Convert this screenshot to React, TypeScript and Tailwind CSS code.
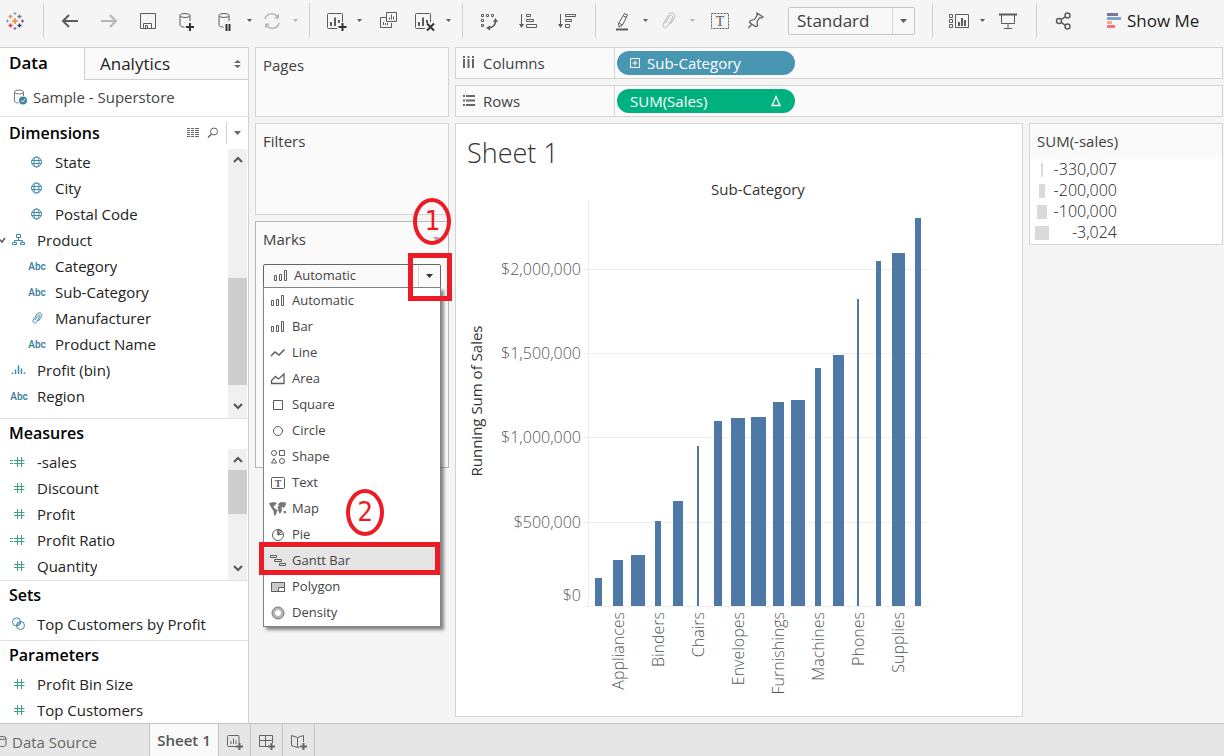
import React from 'react';
import clsx from 'clsx';

type IconProps = { children: React.ReactNode; size?: 16 | 24; className?: string };

const Icon: React.FC<IconProps> = ({ children, size = 16, className }) => (
  <svg
    width={size}
    height={size}
    viewBox={`0 0 ${size} ${size}`}
    fill="none"
    stroke="currentColor"
    strokeWidth="1"
    aria-hidden="true"
    className={clsx('shrink-0 overflow-visible', className)}
  >
    {children}
  </svg>
);

/* ---------- toolbar pieces ---------- */

interface ToolProps {
  label: string;
  disabled?: boolean;
  children: React.ReactNode;
}

const Tool: React.FC<ToolProps> = ({ label, disabled, children }) => (
  <button
    type="button"
    aria-label={label}
    disabled={disabled}
    className="size-6 shrink-0 text-[#5c5c5c] disabled:text-[#b5b5b5]"
  >
    <Icon size={24}>{children}</Icon>
  </button>
);

const Triangle: React.FC<{ className?: string }> = ({ className }) => (
  <svg width="7" height="4" viewBox="0 0 7 4" aria-hidden="true" className={clsx('shrink-0', className)}>
    <path d="M0 0h7L3.5 4z" fill="currentColor" />
  </svg>
);

const Split: React.FC<ToolProps> = ({ label, disabled, children }) => (
  <div className="flex items-center gap-[5px]">
    <Tool label={label} disabled={disabled}>{children}</Tool>
    <button
      type="button"
      aria-label={`${label} options`}
      disabled={disabled}
      className="flex h-6 w-3 items-center justify-center text-[#5c5c5c] disabled:text-[#b5b5b5]"
    >
      <svg width="5" height="3" viewBox="0 0 5 3" aria-hidden="true">
        <path d="M0 0h5L2.5 3z" fill="currentColor" />
      </svg>
    </button>
  </div>
);

const Divider = () => <div className="h-[35px] w-px shrink-0 bg-[#cfcfcf]" />;

const Cylinder = () => (
  <>
    <ellipse cx="10" cy="6.5" rx="5" ry="2" />
    <path d="M5 6.5v9.500c0 1.200 1.800 2 4.500 2.200M15 6.500v5.500" />
  </>
);

const SheetFrame = ({ x = 3 }: { x?: number }) => (
  <>
    <path d={`M${x + 10} 19.500H${x + 1.5}a1 1 0 0 1-1-1V5.500a1 1 0 0 1 1-1h13a1 1 0 0 1 1 1V13`} />
    <path d={`M${x + 4} 17v-4M${x + 8} 17V8.500M${x + 12} 14v-3`} strokeWidth="2" />
  </>
);

const Logo = () => (
  <svg width="18" height="18" viewBox="0 0 18 18" aria-hidden="true" className="shrink-0">
    <path d="M9 6v6M6 9h6" stroke="#eb8a3c" strokeWidth="1.500" />
    <path d="M4.500 2.500v4M2.500 4.500h4" stroke="#e0974a" strokeWidth="1.300" />
    <path d="M13.500 2.500v4M11.500 4.500h4" stroke="#5c7f9c" strokeWidth="1.300" />
    <path d="M4.500 11.500v4M2.500 13.500h4" stroke="#e3312c" strokeWidth="1.300" />
    <path d="M13.500 11.500v4M11.500 13.500h4" stroke="#2b3180" strokeWidth="1.300" />
    <path d="M9 0v3M7.500 1.500h3" stroke="#7b9cb8" />
    <path d="M9 15v3M7.500 16.500h3" stroke="#6f6ba4" />
    <path d="M1.500 7.500v3M0 9h3" stroke="#7b9cb8" />
    <path d="M16.500 7.500v3M15 9h3" stroke="#4d5191" />
  </svg>
);

const Toolbar = () => (
  <header className="flex h-[47px] shrink-0 items-center overflow-hidden pb-[6px] pl-[6px]">
    <Logo />
    <div className="ml-[19px]"><Divider /></div>

    <div className="mr-2 ml-[14px] flex items-center gap-[15px]">
      <Tool label="Back">
        <path d="M5 12h15M11 6l-6 6 6 6" strokeWidth="2" />
      </Tool>
      <Tool label="Forward" disabled>
        <path d="M4 12h15M13 6l6 6-6 6" strokeWidth="2" />
      </Tool>
      <Tool label="Save">
        <path d="M4.500 4.500h15v15h-15zM7.500 19.500v-5h8v5M9.500 19.500v-3h2v3" />
      </Tool>
      <Tool label="New data source">
        <Cylinder />
        <path d="M15 14v8M11 18h8" stroke="#333" strokeWidth="2" />
      </Tool>
      <div className="flex items-center gap-[5px]">
        <Split label="Pause auto updates">
          <Cylinder />
          <path d="M12.500 15v7M15.500 15v7" stroke="#333" strokeWidth="2" />
        </Split>
        <Split label="Refresh" disabled>
          <path d="M5 10a7 7 0 0 1 12-3M19 14a7 7 0 0 1-12 3" strokeWidth="1.500" />
          <path d="M19 4.500v5h-5zM5 19.500v-5h5z" fill="currentColor" stroke="none" />
        </Split>
      </div>
    </div>
    <Divider />

    <div className="mr-2 ml-[14px] flex items-center gap-3">
      <Split label="New worksheet">
        <SheetFrame />
        <path d="M18.500 14v8M14.500 18h8" stroke="#333" strokeWidth="2" />
      </Split>
      <Tool label="Duplicate sheet">
        <path d="M9.500 3.500h10v9h-10zM9 8.500H3.500v10h11V14" />
        <path d="M12.500 10.500v-2M14.500 10.500v-5M16.500 10.500v-3M6.500 16v-3M8.500 16v-2M10.500 16v-2" />
      </Tool>
      <Split label="Clear sheet">
        <SheetFrame x={2} />
        <path d="M14 14.500l7 7M21 14.500l-7 7" stroke="#333" strokeWidth="2" />
      </Split>
    </div>
    <Divider />

    <div className="mr-4 ml-[14px] flex items-center gap-[15px]">
      <Tool label="Swap rows and columns">
        <path d="M4.500 5.500h2v2h-2zM9.500 5.500h2v2h-2zM14.500 5.500h2v2h-2zM4.500 10.500h2v2h-2zM4.500 15.500h2v2h-2z" />
        <path d="M18.500 12c0 4-3 6.500-7 7" strokeWidth="1.500" />
        <path d="M18.500 9l2.500 4h-5zM9 19l4-2.500v5z" fill="currentColor" stroke="none" />
      </Tool>
      <Tool label="Sort ascending">
        <path d="M5.500 5v11" />
        <path d="M5.500 19L3 15h5z" fill="currentColor" stroke="none" />
        <path d="M10.500 5.500h4v2h-4zM10.500 10.500h7v2h-7zM10.500 15.500h10v3h-10z" />
      </Tool>
      <Tool label="Sort descending">
        <path d="M5.500 5v11" />
        <path d="M5.500 19L3 15h5z" fill="currentColor" stroke="none" />
        <path d="M10.500 5.500h10v2h-10zM10.500 10.500h6v2h-6zM10.500 15.500h4v3h-4z" />
      </Tool>
    </div>
    <Divider />

    <div className="mr-4 ml-[14px] flex items-center gap-[6px]">
      <Split label="Highlight">
        <path d="M14.500 4.500l3 1.500-5 10-3.500 2-.5-3.500zM9 14l3 2M13.500 7l3 1.500" />
        <path d="M6 20.500h12" strokeWidth="2" />
      </Split>
      <Split label="Group members" disabled>
        <path d="M8 14.500l4.500-7c1.500-2 4-.5 3 1.500l-5 8c-2 3-6 1-4-2.500l5.500-9c2.500-3.500 7.500-.5 5.500 3l-4 6.500" />
      </Split>
      <div className="ml-1 flex items-center gap-3">
        <Tool label="Show mark labels">
          <path d="M3.500 4.500h17v15h-17z" strokeDasharray="2 1" />
          <text x="12" y="17" textAnchor="middle" fontSize="14" fill="currentColor" stroke="none" className="font-['Liberation_Serif']">T</text>
        </Tool>
        <Tool label="Fix axes">
          <path d="M13 4l6 4-1.500 1-1.500-.5-3 4 .5 4.500-2 .5-6-4 1-2 4-1 2.500-4zM8 15l-3.500 4" strokeWidth="1.200" />
        </Tool>
      </div>
    </div>

    <div className="relative ml-1 h-7 w-[127px] shrink-0">
      <select
        aria-label="Fit"
        className="size-full appearance-none rounded-xs border border-[#c6c6c6] bg-[#f8f8f8] pl-2 text-[17px] text-[#404040]"
      >
        <option>Standard</option>
      </select>
      <span className="pointer-events-none absolute inset-y-px right-px flex w-[22px] items-center justify-center border-l border-[#d4d4d4] text-[#5c5c5c]">
        <Triangle />
      </span>
    </div>
    <div className="ml-[17px]"><Divider /></div>

    <div className="mr-4 ml-[14px] flex items-center gap-2">
      <Split label="Show cards">
        <path d="M2.500 5.500h3v3h-3zM2.500 10.500h3v3h-3zM2.500 15.500h3v3h-3zM8.500 5.500h13v13h-13z" />
        <path d="M12 17v-4M15 17V9M18 17v-6" strokeWidth="2" />
      </Split>
      <Tool label="Presentation mode">
        <path d="M3 5.500h18" strokeWidth="2" />
        <path d="M5.500 6v8.500h13V6M12 14.500v5M8 19.500h8" />
      </Tool>
    </div>
    <Divider />

    <div className="mx-[14px] flex items-center">
      <Tool label="Share">
        <g strokeWidth="1.500">
          <circle cx="8" cy="12" r="2.500" />
          <circle cx="16.500" cy="6.500" r="2.500" />
          <circle cx="16.500" cy="17.500" r="2.500" />
          <path d="M10 10.700l4.500-3M10 13.300l4.500 3" />
        </g>
      </Tool>
    </div>
    <button type="button" className="ml-[18px] flex shrink-0 items-center gap-[6px] text-[17px] text-[#1c1c1c]">
      <svg width="14" height="15" viewBox="0 0 14 15" aria-hidden="true">
        <path d="M0 0h11v3H0z" fill="#7b7599" />
        <path d="M0 4h14v3H0z" fill="#7da3d2" />
        <path d="M0 8h5v3H0z" fill="#ecb27c" />
        <path d="M0 12h8v3H0z" fill="#fd6f7a" />
      </svg>
      Show Me
    </button>
  </header>
);

/* ---------- data pane ---------- */

type FieldKind = 'geo' | 'hierarchy' | 'abc' | 'group' | 'bin' | 'number' | 'calc' | 'set';

interface Field {
  name: string;
  kind: FieldKind;
  nested?: boolean;
}

const dimensions: Field[] = [
  { name: 'State', kind: 'geo', nested: true },
  { name: 'City', kind: 'geo', nested: true },
  { name: 'Postal Code', kind: 'geo', nested: true },
  { name: 'Product', kind: 'hierarchy' },
  { name: 'Category', kind: 'abc', nested: true },
  { name: 'Sub-Category', kind: 'abc', nested: true },
  { name: 'Manufacturer', kind: 'group', nested: true },
  { name: 'Product Name', kind: 'abc', nested: true },
  { name: 'Profit (bin)', kind: 'bin' },
  { name: 'Region', kind: 'abc' },
];

const measures: Field[] = [
  { name: '-sales', kind: 'calc' },
  { name: 'Discount', kind: 'number' },
  { name: 'Profit', kind: 'number' },
  { name: 'Profit Ratio', kind: 'calc' },
  { name: 'Quantity', kind: 'number' },
];

const sets: Field[] = [{ name: 'Top Customers by Profit', kind: 'set' }];

const parameters: Field[] = [
  { name: 'Profit Bin Size', kind: 'number' },
  { name: 'Top Customers', kind: 'number' },
];

const FieldIcon: React.FC<{ kind: FieldKind }> = ({ kind }) => {
  switch (kind) {
    case 'abc':
      return <span className="font-[Roboto] text-[10px] font-semibold text-[#3f83a1]">Abc</span>;
    case 'geo':
      return (
        <Icon className="text-[#3f8aa8]">
          <circle cx="7.500" cy="8" r="5" />
          <ellipse cx="7.500" cy="8" rx="2.500" ry="5" />
          <path d="M3 6.500h9M3 9.500h9" />
        </Icon>
      );
    case 'hierarchy':
      return (
        <Icon className="text-[#3f8aa8]">
          <path d="M5.500 2.500h4v3h-4zM2.500 10.500h3v2h-4v-2zM9.500 10.500h4v2h-4zM7.500 5.500v3M3.500 10.500v-2h8v2" />
        </Icon>
      );
    case 'group':
      return (
        <Icon className="text-[#3f8aa8]">
          <path d="M6 10l3-4.500c1-1.300 2.500-.3 1.800 1L7.500 12c-1.500 2-4.500.5-3.200-2L8 4c2-2.500 6-.5 4.500 2.500L9.500 11" />
        </Icon>
      );
    case 'bin':
      return (
        <Icon className="text-[#3f8aa8]">
          <path d="M1.500 12v-1.500M4.500 12V7.500M7.500 12V3.500M10.500 12V6.500M13.500 12v-1.500" strokeWidth="1.500" />
        </Icon>
      );
    case 'set':
      return (
        <Icon className="text-[#3f8aa8]">
          <circle cx="5.500" cy="6" r="4" />
          <circle cx="9.500" cy="9.500" r="4" />
          <path d="M5.500 9.500l4-3.500M7 10l3-3" />
        </Icon>
      );
    default:
      return (
        <Icon className="text-[#3fa284]">
          <path d="M6.500 3v10M10.500 3v10M3 6.500h10.500M3 9.500h10.500" />
          {kind === 'calc' && <path d="M-1 6.500h3M-1 9.500h3" />}
        </Icon>
      );
  }
};

const FieldList: React.FC<{ fields: Field[] }> = ({ fields }) => (
  <ul className="min-w-0 flex-1">
    {fields.map((f) => (
      <li
        key={f.name}
        className={clsx('relative flex h-[26px] items-center', f.nested ? 'pl-[26px]' : 'pl-2')}
      >
        {f.kind === 'hierarchy' && (
          <Icon className="absolute left-[-6px] text-[#555]">
            <path d="M5 7l3 3 3-4" strokeWidth="1.500" />
          </Icon>
        )}
        <span className="flex w-[22px] shrink-0 items-center justify-center">
          <FieldIcon kind={f.kind} />
        </span>
        <span className="ml-[7px] truncate">{f.name}</span>
      </li>
    ))}
  </ul>
);

const Scrollbar: React.FC<{ track: string; thumb: string }> = ({ track, thumb }) => (
  <div className="mr-px flex w-[19px] shrink-0 flex-col items-center bg-[#f0f0f0] text-[#555]">
    <button type="button" aria-label="Scroll up" className="flex h-[21px] w-full items-center justify-center">
      <Icon size={16}><path d="M4 10l4-4 4 4" strokeWidth="2" /></Icon>
    </button>
    <div className={track} />
    <div className={clsx('w-full bg-[#cdcdcd]', thumb)} />
    <button type="button" aria-label="Scroll down" className="mt-auto flex h-6 w-full items-center justify-center">
      <Icon size={16}><path d="M4 6l4 4 4-4" strokeWidth="2" /></Icon>
    </button>
  </div>
);

const PaneHeading: React.FC<{ children: React.ReactNode }> = ({ children }) => (
  <h2 className="pb-[2px] pl-[9px] text-[16px] leading-[28px] font-semibold text-black">{children}</h2>
);

const DataPane = () => (
  <aside className="flex w-[249px] shrink-0 flex-col border-t border-r border-[#d0d0d0] bg-white text-[15px] text-[#222]">
    <div className="flex h-8 shrink-0">
      <button type="button" className="w-[84px] pb-[2px] pl-[9px] text-left text-[17px] font-semibold text-black">Data</button>
      <button
        type="button"
        className="flex flex-1 items-center justify-between border-b border-l border-[#d0d0d0] bg-[#fafafa] pr-[7px] pl-[15px] text-[17px]"
      >
        Analytics
        <svg width="7" height="8" viewBox="0 0 7 8" aria-hidden="true">
          <path d="M0 3h7L3.500 0zM0 5h7L3.500 8z" fill="#666" />
        </svg>
      </button>
    </div>

    <div className="flex h-9 shrink-0 items-center gap-[5px] pb-[2px] pl-3 text-[#444]">
      <Icon className="text-[#777]">
        <ellipse cx="7" cy="3" rx="4.500" ry="2" />
        <path d="M2.500 3v9c0 1 1.500 2 4 2M11.500 3v4" />
        <circle cx="11" cy="11.500" r="4" fill="#3f83a1" stroke="none" />
        <path d="M9 11.500l1.500 1.500 2.500-3" stroke="white" />
      </Icon>
      Sample - Superstore
    </div>

    <section className="border-t border-[#e2e2e2]">
      <div className="flex h-8 items-end justify-between">
        <PaneHeading>Dimensions</PaneHeading>
        <div className="flex h-8 items-center gap-1 text-[#666]">
          <button type="button" aria-label="View data">
            <Icon>
              <path d="M2 3.500h3M6 3.500h3M10 3.500h4M2 5.500h3M6 5.500h3M10 5.500h4M2 7.500h3M6 7.500h3M10 7.500h4M2 9.500h3M6 9.500h3M10 9.500h4M2 11.500h3M6 11.500h3M10 11.500h4" />
            </Icon>
          </button>
          <button type="button" aria-label="Find field">
            <Icon>
              <circle cx="9" cy="6.500" r="3.500" />
              <path d="M6.500 9L3 12.500" strokeWidth="1.500" />
            </Icon>
          </button>
          <button type="button" aria-label="Pane menu" className="ml-px flex h-[22px] w-[22px] items-center justify-center border-l border-[#d0d0d0]">
            <Triangle />
          </button>
        </div>
      </div>
      <div className="flex h-[269px]">
        <FieldList fields={dimensions} />
        <Scrollbar track="h-[108px]" thumb="h-[107px]" />
      </div>
    </section>

    <section className="border-t border-[#e2e2e2]">
      <PaneHeading>Measures</PaneHeading>
      <div className="flex h-[131px]">
        <FieldList fields={measures} />
        <Scrollbar track="h-0" thumb="h-11" />
      </div>
    </section>

    <section className="border-t border-[#e2e2e2] pb-[3px]">
      <PaneHeading>Sets</PaneHeading>
      <FieldList fields={sets} />
    </section>

    <section className="border-t border-[#e2e2e2]">
      <PaneHeading>Parameters</PaneHeading>
      <FieldList fields={parameters} />
    </section>
  </aside>
);

/* ---------- marks card ---------- */

const barMark = <path d="M1.500 7.500h2v5h-2zM6.500 6.500h2v6h-2zM11.500 2.500h2v10h-2z" />;

const markTypes: { name: string; icon: React.ReactNode }[] = [
  { name: 'Automatic', icon: barMark },
  { name: 'Bar', icon: barMark },
  { name: 'Line', icon: <path d="M1 11l4-4 4 3 5.500-5.500" strokeWidth="1.500" /> },
  { name: 'Area', icon: <path d="M1.500 12.500V9.500l4-4 3 2.500 5.500-5v9.500z" strokeWidth="1.300" /> },
  { name: 'Square', icon: <path d="M3.500 3.500h9v9h-9z" /> },
  { name: 'Circle', icon: <circle cx="8" cy="8" r="4.500" /> },
  {
    name: 'Shape',
    icon: (
      <>
        <circle cx="4" cy="4" r="2.500" />
        <path d="M9.500 1.500h5v5h-5zM4 9.500l2.500 4.500h-5z" />
        <circle cx="12" cy="12" r="2.500" />
      </>
    ),
  },
  {
    name: 'Text',
    icon: (
      <>
        <rect x="1.500" y="2.500" width="13" height="11" rx="1" />
        <text x="8" y="12" textAnchor="middle" fontSize="10" fill="currentColor" stroke="none" className="font-['Liberation_Serif'] font-bold">T</text>
      </>
    ),
  },
  {
    name: 'Map',
    icon: (
      <g fill="#777" stroke="none">
        <path d="M-1 2l5-1 3 1-2 2-1.500 2L5.500 8l2 1-1 3-1.500 3-1-1-.5-4L1.500 7 0 4.500z" />
        <path d="M8 3l3-2 5 .5 0 2-1.500 2.500-1 1.500-1-2-1 1 .5 3L10 13l-1.500-2.500L8 8 7.500 6 9 4.500z" />
        <path d="M13.500 10l2.500 0 0 2-2 .5z" />
      </g>
    ),
  },
  {
    name: 'Pie',
    icon: (
      <>
        <circle cx="8" cy="8" r="5.500" />
        <path d="M8 8V2.500l4 1.500z" fill="#bbb" />
        <path d="M8 8V2.500M8 8l4-4M8 8l5-1" />
      </>
    ),
  },
  { name: 'Gantt Bar', icon: <path d="M.5 2.500h6v2h-6zM4.500 6.500h7v2h-7zM9.500 10.500h6v2h-6z" /> },
  {
    name: 'Polygon',
    icon: (
      <>
        <path d="M1.500 3.500h13v9h-13z" fill="#c9c9c9" />
        <path d="M8.500 8.500h6v4h-6z" fill="white" />
      </>
    ),
  },
  {
    name: 'Density',
    icon: (
      <>
        <circle cx="8" cy="8" r="4.500" stroke="#b5b5b5" strokeWidth="3" />
        <circle cx="8" cy="8" r="6" stroke="#777" />
      </>
    ),
  },
];

const Step: React.FC<{ children: React.ReactNode; className: string }> = ({ children, className }) => (
  <span
    className={clsx(
      "absolute flex h-[47px] w-[38px] items-center justify-center rounded-[50%] border-4 border-[#ed1c24] font-['DejaVu_Sans_Mono',monospace] text-[26px] text-[#ed1c24]",
      className,
    )}
  >
    {children}
  </span>
);

const Card: React.FC<{ title: string; className?: string; children?: React.ReactNode }> = ({ title, className, children }) => (
  <section className={clsx('border bg-[#fafafa] px-[7px] pt-[6px]', className)}>
    <h2 className="text-[15px] leading-[22px] text-[#404040]">{title}</h2>
    {children}
  </section>
);

const MarksCard = () => (
  <Card title="Marks" className="relative h-[247px] border-[#b8b8b8]">
    <Triangle className="absolute top-[15px] right-2 text-[#aaa]" />
    <div className="relative mt-[14px]">
      <Icon className="absolute top-1 left-[10px] text-[#5c5c5c]">{barMark}</Icon>
      <select
        aria-label="Mark type"
        className="block h-6 w-full appearance-none rounded-t-xs border border-[#666] bg-[#fafafa] pl-[30px] text-[13px] text-[#444]"
      >
        {markTypes.map((m) => <option key={m.name}>{m.name}</option>)}
      </select>
      <span className="pointer-events-none absolute inset-y-px right-px flex w-[22px] items-center justify-center border-l border-[#d8d8d8] text-[#333]">
        <Triangle />
      </span>

      <ul className="absolute inset-x-0 top-[23px] z-10 border border-[#7d838a] bg-white text-[13px] text-[#444] shadow-[3px_3px_3px_rgba(0,0,0,0.45)]">
        {markTypes.map((m) => (
          <li key={m.name}>
            <button
              type="button"
              className={clsx('flex h-[26px] w-full items-center gap-[6px] pl-[6px]', m.name === 'Gantt Bar' && 'bg-[#e5e5e5]')}
            >
              <Icon className="text-[#5c5c5c]">{m.icon}</Icon>
              {m.name}
            </button>
          </li>
        ))}
      </ul>

      {/* walkthrough callouts */}
      <span className="absolute top-[-11px] right-[-11px] z-20 h-12 w-11 border-5 border-[#ed1c24]" />
      <span className="absolute top-[278px] left-[-4px] z-20 h-[33px] w-[181px] border-5 border-[#ed1c24]" />
      <Step className="top-[-66px] right-[-10px] z-20">1</Step>
      <Step className="top-[225px] right-[57px] z-20">2</Step>
    </div>
  </Card>
);

/* ---------- shelves ---------- */

const Shelf: React.FC<{ label: string; icon: React.ReactNode; children: React.ReactNode }> = ({ label, icon, children }) => (
  <div className="flex h-8 items-stretch border border-[#d4d4d4] bg-[#fafafa]">
    <div className="flex w-[159px] shrink-0 items-center gap-[6px] border-r border-[#d4d4d4] pl-[5px] text-[15px] text-[#404040]">
      <Icon className="text-[#666]">{icon}</Icon>
      {label}
    </div>
    <div className="flex items-center pl-[2px]">{children}</div>
  </div>
);

/* ---------- chart ---------- */

// left edge, width and top of each mark, in plot pixels
const bars = [
  [139, 7, 398], [157, 10, 380], [175, 14, 375], [199, 6, 341], [217, 10, 321], [241, 2, 266],
  [258, 8, 241], [275, 14, 238], [295, 15, 237], [317, 11, 222], [335, 14, 220], [359, 6, 188],
  [377, 11, 175], [401, 2, 119], [420, 5, 81], [436, 13, 73], [459, 6, 38],
];

const yTicks = [
  { label: '$2,000,000', line: 89, text: 95 },
  { label: '$1,500,000', line: 173, text: 179 },
  { label: '$1,000,000', line: 257, text: 263 },
  { label: '$500,000', line: 342, text: 348 },
  { label: '$0', line: 426, text: 421 },
];

const xLabels = ['Appliances', 'Binders', 'Chairs', 'Envelopes', 'Furnishings', 'Machines', 'Phones', 'Supplies'];

const BASE = 426;

const Chart = () => (
  <svg width="500" height="530" viewBox="0 0 500 530" role="img" aria-label="Running Sum of Sales by Sub-Category" className="block">
    <text x="302" y="15" textAnchor="middle" fontSize="15" fill="#333" className="font-medium">Sub-Category</text>
    <text transform="translate(26 221) rotate(-90)" textAnchor="middle" fontSize="15" fill="#333" className="font-medium">
      Running Sum of Sales
    </text>
    <g shapeRendering="crispEdges">
      {yTicks.map((t) => <path key={t.label} d={`M127 ${t.line + 0.5}H473`} stroke="#efefef" />)}
      <path d={`M132.500 20V${BASE}`} stroke="#efefef" />
      {bars.map(([x, w, top], i) => (
        <React.Fragment key={x}>
          <rect x={x} y={top} width={w} height={BASE - top} fill="#4e79a7" />
          {i > 0 && <path d={`M${132.5 + i * 20} ${BASE}v2`} stroke="#efefef" />}
        </React.Fragment>
      ))}
    </g>
    <g fontSize="16" fill="#555" className="font-light">
      {yTicks.map((t) => <text key={t.label} x="125" y={t.text} textAnchor="end">{t.label}</text>)}
      {xLabels.map((label, i) => (
        <text key={label} transform={`translate(${168 + i * 40} 432) rotate(-90)`} textAnchor="end">{label}</text>
      ))}
    </g>
  </svg>
);

const legend = [
  { value: '-330,007', bar: 'w-[2px]' },
  { value: '-200,000', bar: 'w-[6px]' },
  { value: '-100,000', bar: 'w-[10px]' },
  { value: '-3,024', bar: 'w-[14px]' },
];

const Legend = () => (
  <section className="w-[194px] shrink-0 self-start border border-[#d4d4d4] bg-white pb-px">
    <h2 className="bg-[#fafafa] pl-[7px] text-[15px] leading-[35px] text-[#404040]">SUM(-sales)</h2>
    <ul>
      {legend.map((row) => (
        <li key={row.value} className="flex h-[21px] items-center pl-[5px] text-[16px] leading-[21px] font-light text-[#222]">
          <span className="flex w-[14px] justify-center"><span className={clsx('h-[14px] bg-[#dadada]', row.bar)} /></span>
          <span className="w-[68px] text-right">{row.value}</span>
        </li>
      ))}
    </ul>
  </section>
);

/* ---------- bottom tabs ---------- */

const addTabs = [
  { label: 'New worksheet', icon: <path d="M12 9V2.500a1 1 0 0 0-1-1H1.500a1 1 0 0 0-1 1v9a1 1 0 0 0 1 1H9M4 10V7M6.500 10V4.500M9 10V6.500" /> },
  { label: 'New dashboard', icon: <path d="M13.500 9V1.500h-13v11H9M.5 6.500h13M6.500 1.500v11" /> },
  { label: 'New story', icon: <path d="M6.500 13.500l-6-2v-10l6 2zM6.500 3.500l6-2V8M6.500 3.500v10l2-.5" /> },
];

const SheetTabs = () => (
  <footer className="flex h-[33px] shrink-0 border-t border-[#c4c4c4] bg-[#e6e6e6] text-[15px] text-[#666]">
    <button type="button" className="flex w-[150px] items-center border-r border-[#c4c4c4] pt-1">
      <Icon className="-ml-1">
        <ellipse cx="6" cy="4" rx="4" ry="1.500" />
        <path d="M2 4v7c0 2 8 2 8 0V4" />
      </Icon>
      Data Source
    </button>
    <button type="button" className="w-[69px] border-r border-[#c4c4c4] bg-[#fafafa] font-semibold text-[#555]">Sheet 1</button>
    {addTabs.map((t) => (
      <button key={t.label} type="button" aria-label={t.label} className="flex w-8 items-center justify-center border-r border-[#c4c4c4] pt-[3px]">
        <Icon>
          {t.icon}
          <path d="M12.500 9v7M9 12.500h7" strokeWidth="2" />
        </Icon>
      </button>
    ))}
  </footer>
);

export default function App() {
  return (
    <div className="flex min-h-screen flex-col bg-[#f5f5f5] font-['Open_Sans','Noto_Sans',sans-serif] text-[#222]">
      <Toolbar />
      <div className="flex flex-1 gap-[6px] pr-px">
        <DataPane />

        <div className="flex w-[194px] shrink-0 flex-col gap-[6px]">
          <Card title="Pages" className="h-[70px] border-[#d4d4d4]" />
          <Card title="Filters" className="h-[92px] border-[#d4d4d4]" />
          <MarksCard />
        </div>

        <main className="flex min-w-0 flex-1 flex-col gap-[6px] pb-[6px]">
          <Shelf
            label="Columns"
            icon={<path d="M3 1v2M3 4v9M7.500 1v2M7.500 4v9M12 1v2M12 4v9" strokeWidth="2" />}
          >
            <button type="button" className="flex h-6 w-[178px] items-center gap-[3px] rounded-full bg-[#4996b2] pl-[11px] text-[15px] font-medium text-white">
              <Icon><path d="M2.500 3.500h9v9h-9zM4.500 8h5M7 5.500v5" /></Icon>
              Sub-Category
            </button>
          </Shelf>
          <Shelf
            label="Rows"
            icon={<path d="M2 3h2M5 3h9M2 7.500h2M5 7.500h9M2 12h2M5 12h9" strokeWidth="2" />}
          >
            <button type="button" className="flex h-6 w-[178px] items-center justify-between rounded-full bg-[#00b180] pr-[11px] pl-[13px] text-[15px] font-medium text-white">
              SUM(Sales)
              <Icon><path d="M8 3.500l4 9H4z" strokeWidth="1.300" /></Icon>
            </button>
          </Shelf>

          <div className="flex flex-1 gap-[6px]">
            <section className="min-w-0 flex-1 overflow-hidden border border-[#d4d4d4] bg-white">
              <h1 className="h-14 pt-[9px] pl-[11px] text-[27px] leading-10 font-light text-[#333]">Sheet 1</h1>
              <Chart />
            </section>
            <Legend />
          </div>
        </main>
      </div>
      <SheetTabs />
    </div>
  );
}
